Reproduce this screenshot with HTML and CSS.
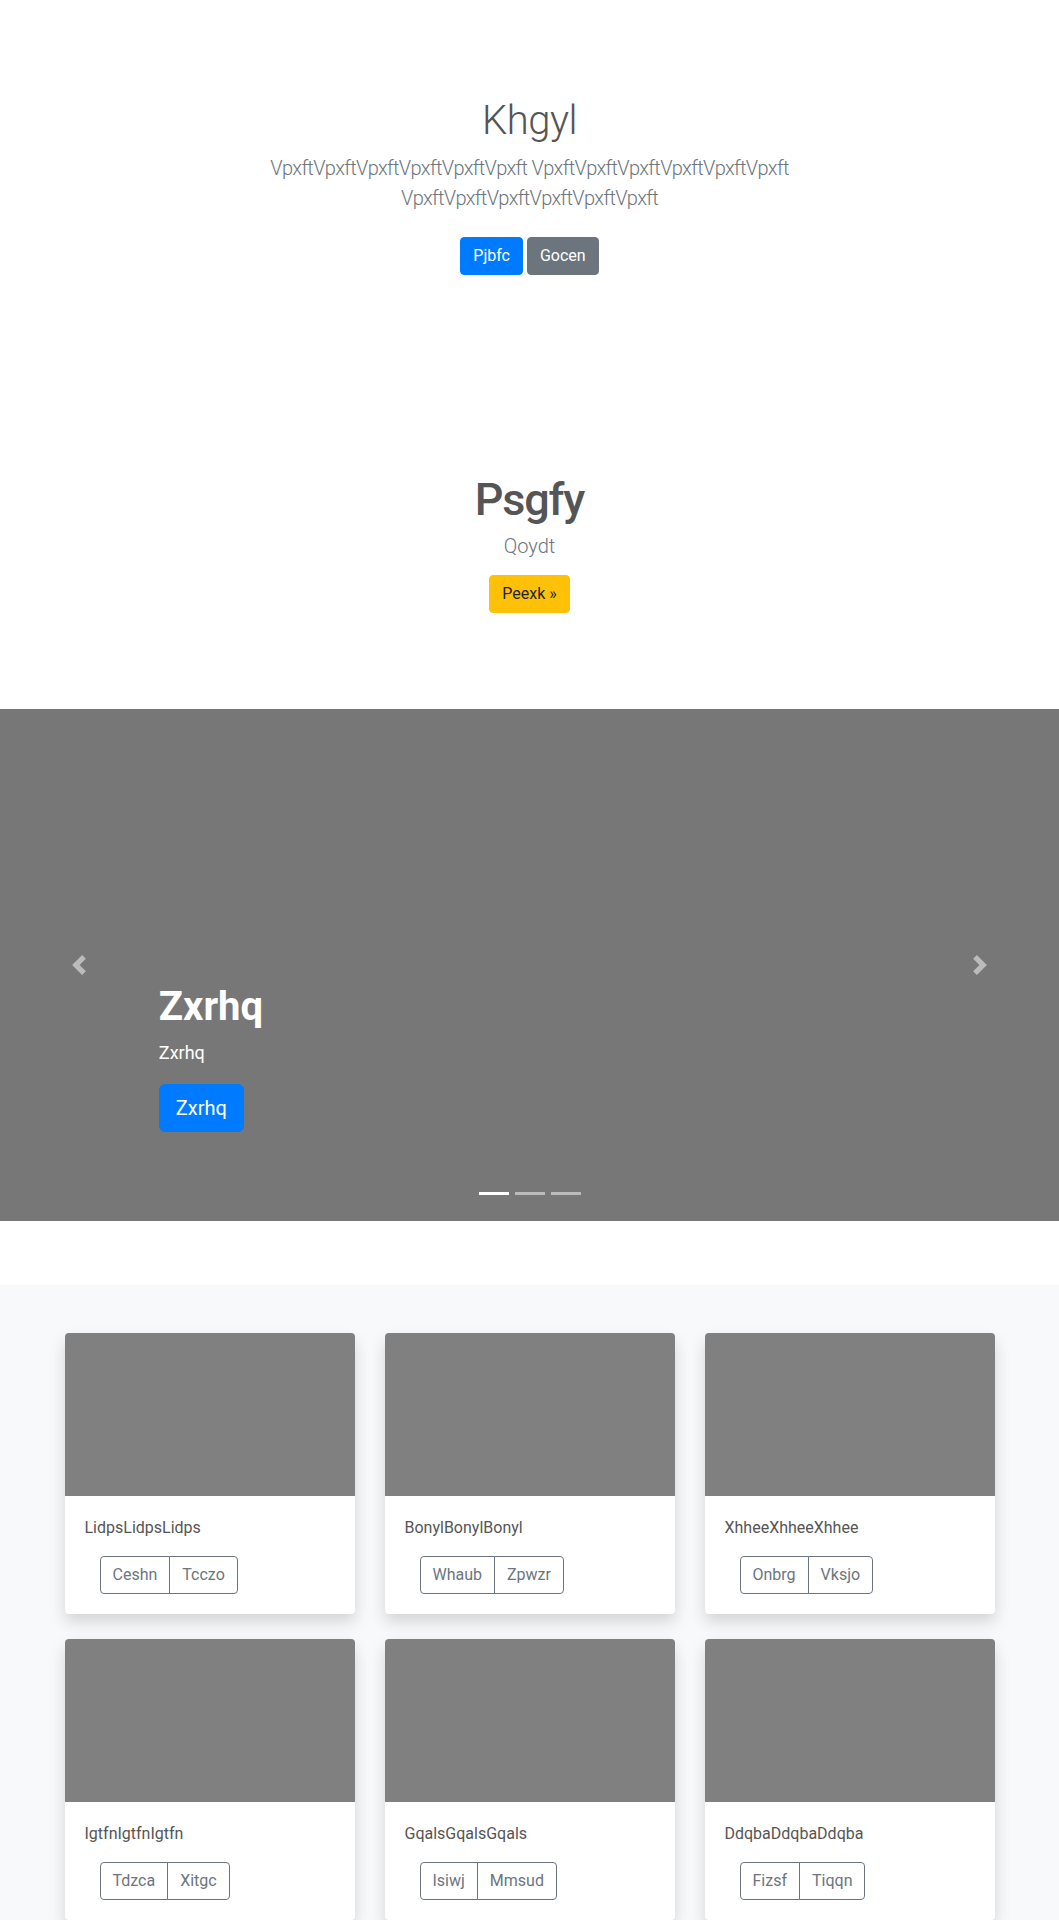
FILE: index.html
```html
<!DOCTYPE html>
<html lang="en">
<head>
<meta charset="utf-8">
<title>Khgyl</title>
<link rel="stylesheet" href="styles.css">
</head>
<body>
<section class="hero">
  <div class="hero-inner">
    <h1 class="hero-title">Khgyl</h1>
    <p class="lead muted">VpxftVpxftVpxftVpxftVpxftVpxft VpxftVpxftVpxftVpxftVpxftVpxft VpxftVpxftVpxftVpxftVpxftVpxft</p>
    <p class="hero-actions"><a class="btn btn-primary" href="#">Pjbfc</a> <a class="btn btn-secondary" href="#">Gocen</a></p>
  </div>
</section>

<section class="promo">
  <h2 class="promo-title">Psgfy</h2>
  <p class="lead muted promo-lead">Qoydt</p>
  <a class="btn btn-warning" href="#">Peexk »</a>
</section>

<section class="carousel">
  <a class="carousel-control prev" href="#" aria-label="Previous">
    <svg width="20" height="20" viewBox="0 0 8 8"><path fill="#fff" d="M5.25 0l-4 4 4 4 1.5-1.5L4.25 4l2.5-2.5L5.25 0z"/></svg>
  </a>
  <a class="carousel-control next" href="#" aria-label="Next">
    <svg width="20" height="20" viewBox="0 0 8 8"><path fill="#fff" d="M2.75 0l-1.5 1.5L3.75 4l-2.5 2.5L2.75 8l4-4-4-4z"/></svg>
  </a>
  <div class="carousel-caption">
    <h2 class="caption-title">Zxrhq</h2>
    <p class="caption-text">Zxrhq</p>
    <a class="btn btn-primary btn-lg" href="#">Zxrhq</a>
  </div>
  <ol class="indicators">
    <li class="active"></li>
    <li></li>
    <li></li>
  </ol>
</section>

<section class="album">
  <div class="album-grid">
    <div class="card">
      <div class="card-img"></div>
      <div class="card-body">
        <p class="card-text">LidpsLidpsLidps</p>
        <div class="btn-group"><a class="btn btn-outline" href="#">Ceshn</a><a class="btn btn-outline" href="#">Tcczo</a></div>
      </div>
    </div>
    <div class="card">
      <div class="card-img"></div>
      <div class="card-body">
        <p class="card-text">BonylBonylBonyl</p>
        <div class="btn-group"><a class="btn btn-outline" href="#">Whaub</a><a class="btn btn-outline" href="#">Zpwzr</a></div>
      </div>
    </div>
    <div class="card">
      <div class="card-img"></div>
      <div class="card-body">
        <p class="card-text">XhheeXhheeXhhee</p>
        <div class="btn-group"><a class="btn btn-outline" href="#">Onbrg</a><a class="btn btn-outline" href="#">Vksjo</a></div>
      </div>
    </div>
    <div class="card">
      <div class="card-img"></div>
      <div class="card-body">
        <p class="card-text">IgtfnIgtfnIgtfn</p>
        <div class="btn-group"><a class="btn btn-outline" href="#">Tdzca</a><a class="btn btn-outline" href="#">Xitgc</a></div>
      </div>
    </div>
    <div class="card">
      <div class="card-img"></div>
      <div class="card-body">
        <p class="card-text">GqalsGqalsGqals</p>
        <div class="btn-group"><a class="btn btn-outline" href="#">Isiwj</a><a class="btn btn-outline" href="#">Mmsud</a></div>
      </div>
    </div>
    <div class="card">
      <div class="card-img"></div>
      <div class="card-body">
        <p class="card-text">DdqbaDdqbaDdqba</p>
        <div class="btn-group"><a class="btn btn-outline" href="#">Fizsf</a><a class="btn btn-outline" href="#">Tiqqn</a></div>
      </div>
    </div>
  </div>
</section>
</body>
</html>
```

FILE: styles.css
```css
* { box-sizing: border-box; }
body {
  margin: 0;
  font-family: Roboto, "Open Sans", "Liberation Sans", sans-serif;
  font-size: 16px;
  line-height: 1.5;
  color: #555;
  background: #fff;
}
a { text-decoration: none; }

.btn {
  display: inline-block;
  font-size: 16px;
  line-height: 24px;
  padding: 6px 12px;
  border: 1px solid transparent;
  border-radius: 4px;
  text-align: center;
  vertical-align: middle;
}
.btn-primary { background: #007bff; border-color: #007bff; color: #fff; }
.btn-secondary { background: #6c757d; border-color: #6c757d; color: #fff; }
.btn-warning { background: #ffc107; border-color: #ffc107; color: #212529; }
.btn-lg { font-size: 20px; line-height: 30px; padding: 8px 16px; border-radius: 6px; }

.lead { font-size: 20px; font-weight: 300; line-height: 30px; }
.muted { color: #6c757d; }

/* hero */
.hero { padding: 97px 15px 0; text-align: center; }
.hero-inner { max-width: 640px; margin: 0 auto; padding: 0 15px; }
.hero-title { font-size: 40px; font-weight: 300; line-height: 48px; margin: 0 0 8px; letter-spacing: -0.5px; }
.hero .lead { margin: 0 0 16px; letter-spacing: -0.65px; }
.hero-actions { margin: 0; }
.hero-actions .btn { margin: 8px 0; }

/* promo */
.promo { text-align: center; padding: 190px 15px 96px; }
.promo-title { font-size: 45px; font-weight: 500; line-height: 54px; margin: 0 0 4px; letter-spacing: -1.2px; }
.promo-lead { margin: 0 0 14px; }

/* carousel */
.carousel {
  position: relative;
  height: 512px;
  background: #777;
  margin-bottom: 64px;
}
.carousel-control {
  position: absolute;
  top: 0;
  bottom: 0;
  width: 15%;
  display: flex;
  align-items: center;
  justify-content: center;
  opacity: .5;
}
.carousel-control.prev { left: 0; }
.carousel-control.next { right: 0; }
.carousel-control svg { display: block; }
.carousel-caption {
  position: absolute;
  left: 15%;
  right: 15%;
  bottom: 89px;
  color: #fff;
  text-align: left;
}
.caption-title { font-size: 40px; font-weight: 700; line-height: 48px; margin: 0 0 8px; }
.caption-text { font-size: 18px; line-height: 27px; margin: 0 0 18px; }
.indicators {
  position: absolute;
  left: 0;
  right: 0;
  bottom: 26px;
  margin: 0;
  padding: 0;
  list-style: none;
  display: flex;
  justify-content: center;
  gap: 6px;
}
.indicators li { width: 30px; height: 3px; background: #fff; opacity: .5; }
.indicators li.active { opacity: 1; }

/* album */
.album { background: #f8f9fa; padding: 48px 0; }
.album-grid {
  width: 930px;
  margin: 0 auto;
  display: grid;
  grid-template-columns: repeat(3, 290px);
  column-gap: 30px;
  row-gap: 25px;
}
.card {
  background: #fff;
  border-radius: 4px;
  box-shadow: 0 8px 16px rgba(0,0,0,.15);
  overflow: hidden;
}
.card-img { height: 163px; background: #808080; }
.card-body { padding: 20px; }
.card-text { margin: 0 0 16px; font-size: 16px; line-height: 24px; color: #555; }
.btn-group { display: inline-flex; margin-left: 15px; }
.btn-outline {
  color: #6c757d;
  border-color: #6c757d;
  background: transparent;
  border-radius: 0;
}
.btn-group .btn-outline:first-child { border-radius: 4px 0 0 4px; }
.btn-group .btn-outline + .btn-outline { margin-left: -1px; border-radius: 0 4px 4px 0; }
```
